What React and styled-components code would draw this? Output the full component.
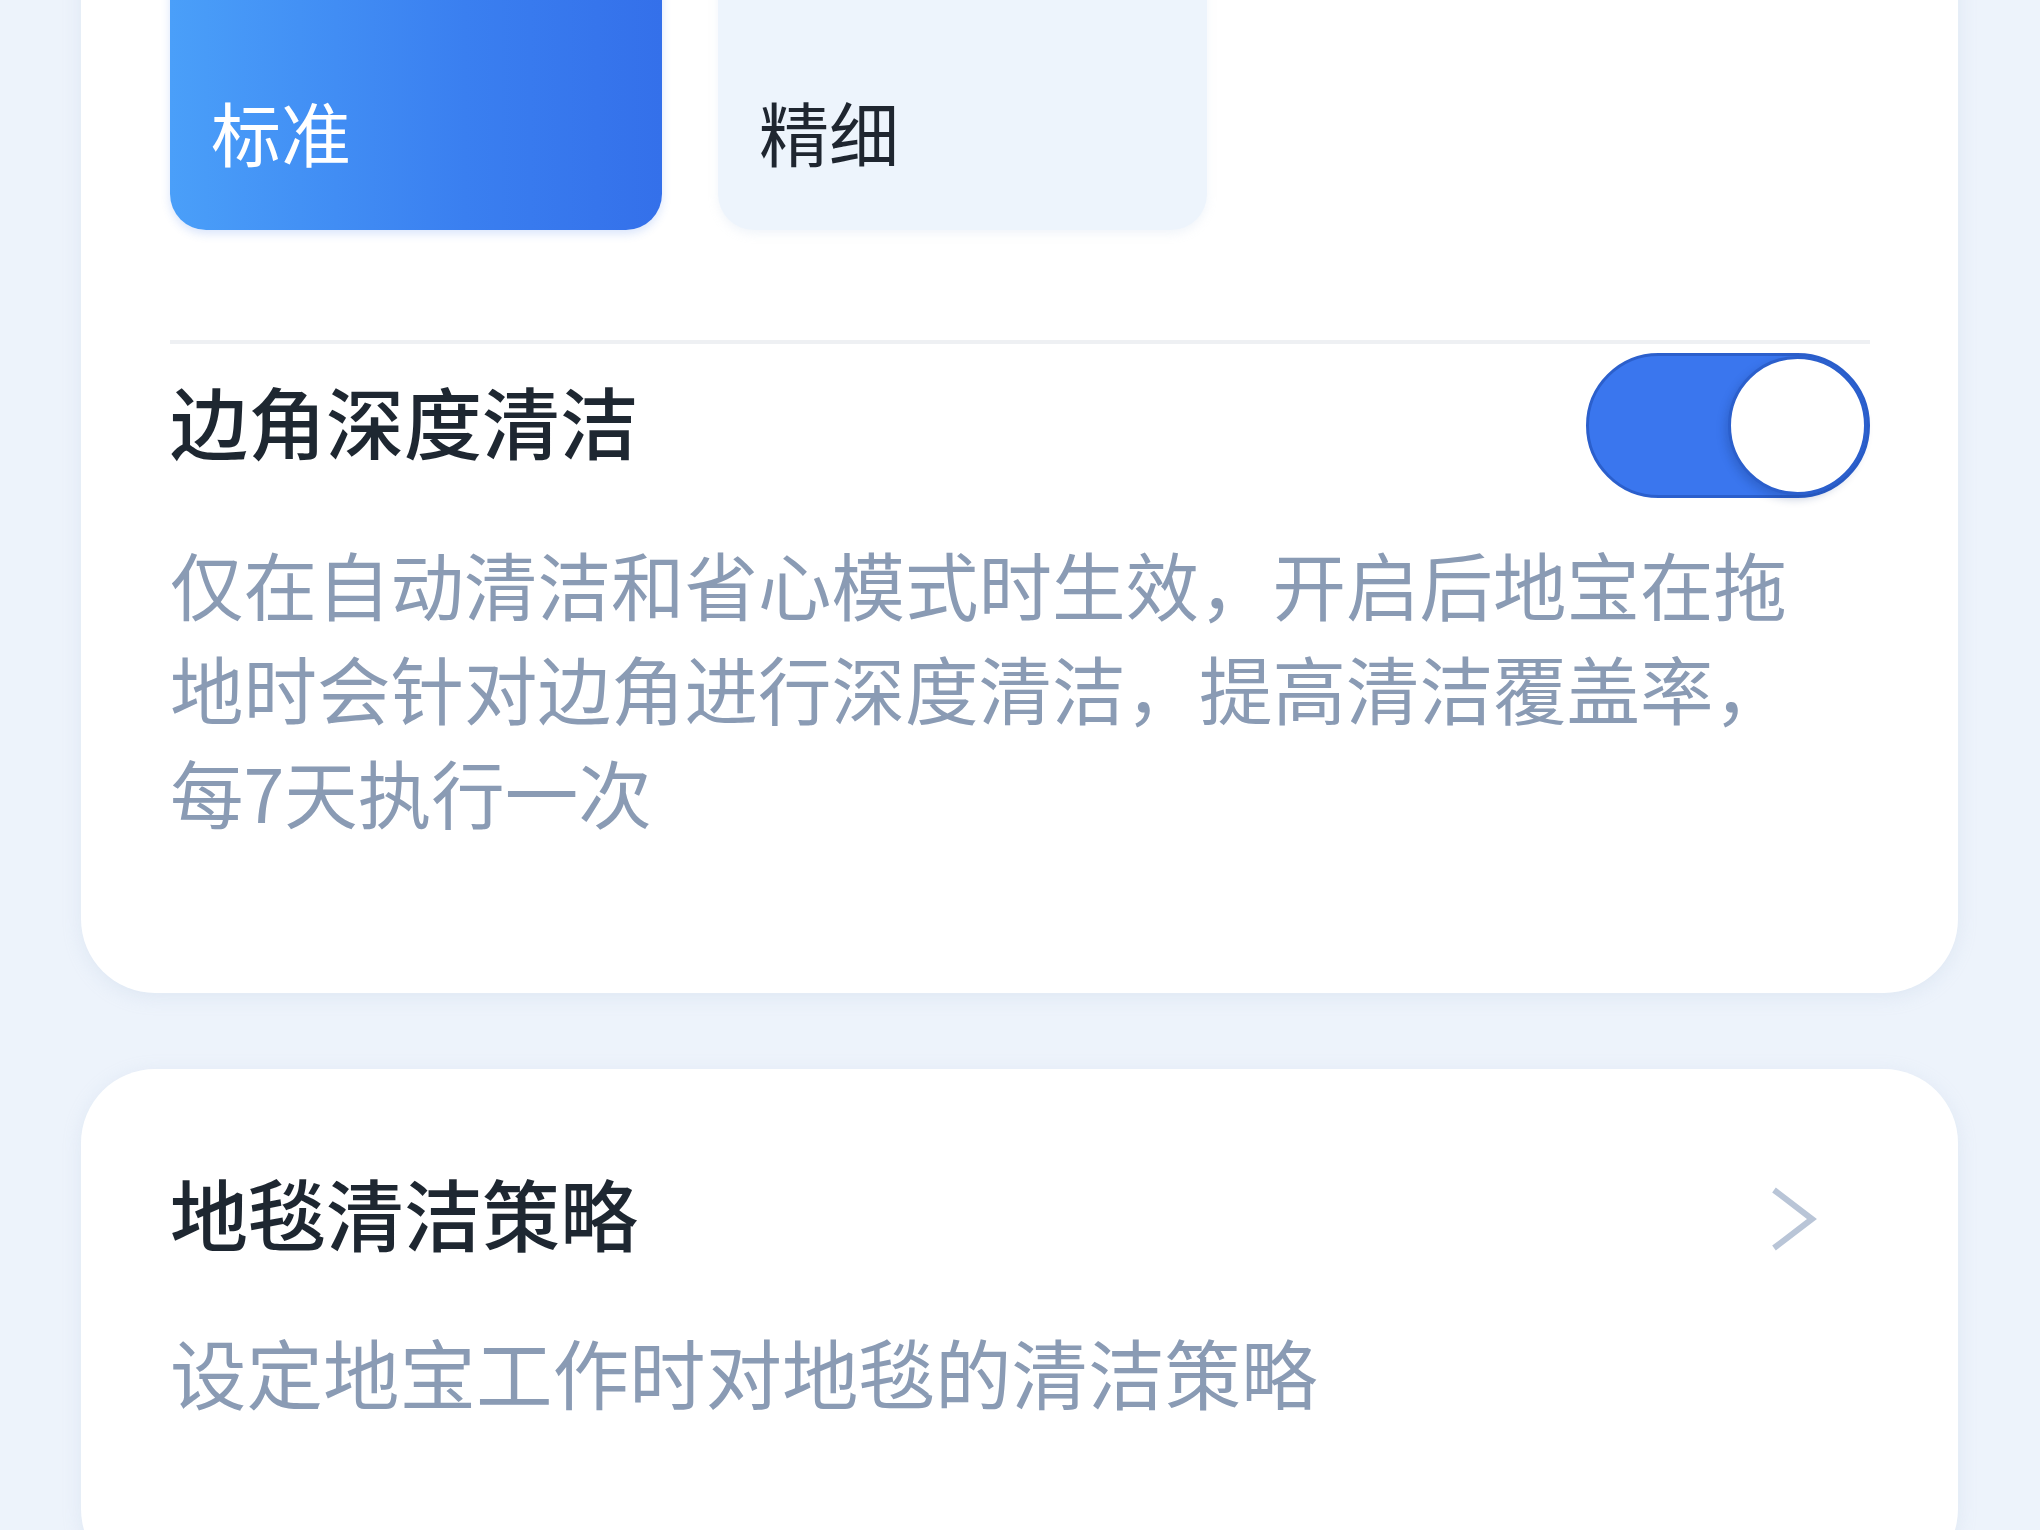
import styled, { createGlobalStyle } from 'styled-components'

const GlobalStyle = createGlobalStyle`
  html, body {
    margin: 0;
    padding: 0;
    background: #edf3fb;
    font-family: "Noto Sans CJK SC", "Noto Sans", sans-serif;
  }
  body {
    overflow: hidden;
  }
`

const Page = styled.div`
  width: 2040px;
  height: 1530px;
  padding: 0 82px 0 81px;
  box-sizing: border-box;
  display: flex;
  flex-direction: column;
  gap: 76px;
  overflow: hidden;
`

const Card = styled.div`
  background: #ffffff;
  border-radius: 74px;
  box-shadow: 0 4px 18px rgba(180, 200, 225, 0.25);
  padding: ${p => p.$pad};
  margin-top: ${p => p.$top || '0'};
  flex-shrink: 0;
`

const ModeRow = styled.div`
  display: flex;
  gap: 56px;
`

const ModeButton = styled.div`
  width: ${p => p.$w}px;
  height: 330px;
  box-sizing: border-box;
  border-radius: 36px;
  display: flex;
  align-items: center;
  padding: 132px 0 0 41px;
  font-size: 70px;
  color: ${p => (p.$active ? '#ffffff' : '#1f2630')};
  background: ${p =>
    p.$active ? 'linear-gradient(90deg, #4a9ff9 0%, #3a7ff0 60%, #3470ea 100%)' : '#edf4fc'};
  box-shadow: ${p => (p.$active ? '0 4px 10px rgba(52, 112, 234, 0.18)' : '0 4px 10px rgba(200, 215, 235, 0.25)')};
`

const Divider = styled.div`
  height: 4px;
  background: #eef0f3;
  margin-top: 110px;
`

const Row = styled.div`
  display: flex;
  align-items: center;
  justify-content: space-between;
  margin-top: ${p => p.$top || '0'};
`

const Title = styled.div`
  font-size: 78px;
  font-weight: 500;
  line-height: 100px;
  padding-bottom: ${p => p.$pb || '0'};
  color: #1e2731;
`

const Desc = styled.div`
  font-size: ${p => p.$size}px;
  line-height: 104px;
  color: #8a9bb4;
  margin-top: ${p => p.$top};
  max-width: ${p => p.$max || 'none'};
`

const Switch = styled.div`
  width: 284px;
  height: 145px;
  box-sizing: border-box;
  border-radius: 73px;
  background: #3a76ee;
  border: 3px solid #2b5fcc;
  display: flex;
  justify-content: flex-end;
  align-items: center;
`

const Knob = styled.div`
  width: 139px;
  height: 139px;
  box-sizing: border-box;
  border-radius: 50%;
  background: #ffffff;
  border: 3px solid #2b5fcc;
  box-shadow: -3px 4px 8px rgba(20, 50, 120, 0.25);
`

const Chevron = styled.svg`
  width: 48px;
  height: 70px;
  margin: 14px 52px 0 0;
`

export default function App() {
  return (
    <>
      <GlobalStyle />
      <Page>
        <Card $pad="0 88px 150px 89px" $top="-100px">
          <ModeRow>
            <ModeButton $active $w={492}>标准</ModeButton>
            <ModeButton $w={489}>精细</ModeButton>
          </ModeRow>
          <Divider />
          <Row $top="9px">
            <Title $pb="12px">边角深度清洁</Title>
            <Switch>
              <Knob />
            </Switch>
          </Row>
          <Desc $size={73.5} $top="33px" $max="1640px">
            仅在自动清洁和省心模式时生效，开启后地宝在拖地时会针对边角进行深度清洁，提高清洁覆盖率，每7天执行一次
          </Desc>
        </Card>
        <Card $pad="93px 88px 160px 89px">
          <Row>
            <Title>地毯清洁策略</Title>
            <Chevron viewBox="0 0 48 70" fill="none">
              <path d="M4 6 L42 35 L4 64" stroke="#b9c5d7" strokeWidth="6" strokeLinejoin="miter" />
            </Chevron>
          </Row>
          <Desc $size={76.5} $top="57px">设定地宝工作时对地毯的清洁策略</Desc>
        </Card>
      </Page>
    </>
  )
}
